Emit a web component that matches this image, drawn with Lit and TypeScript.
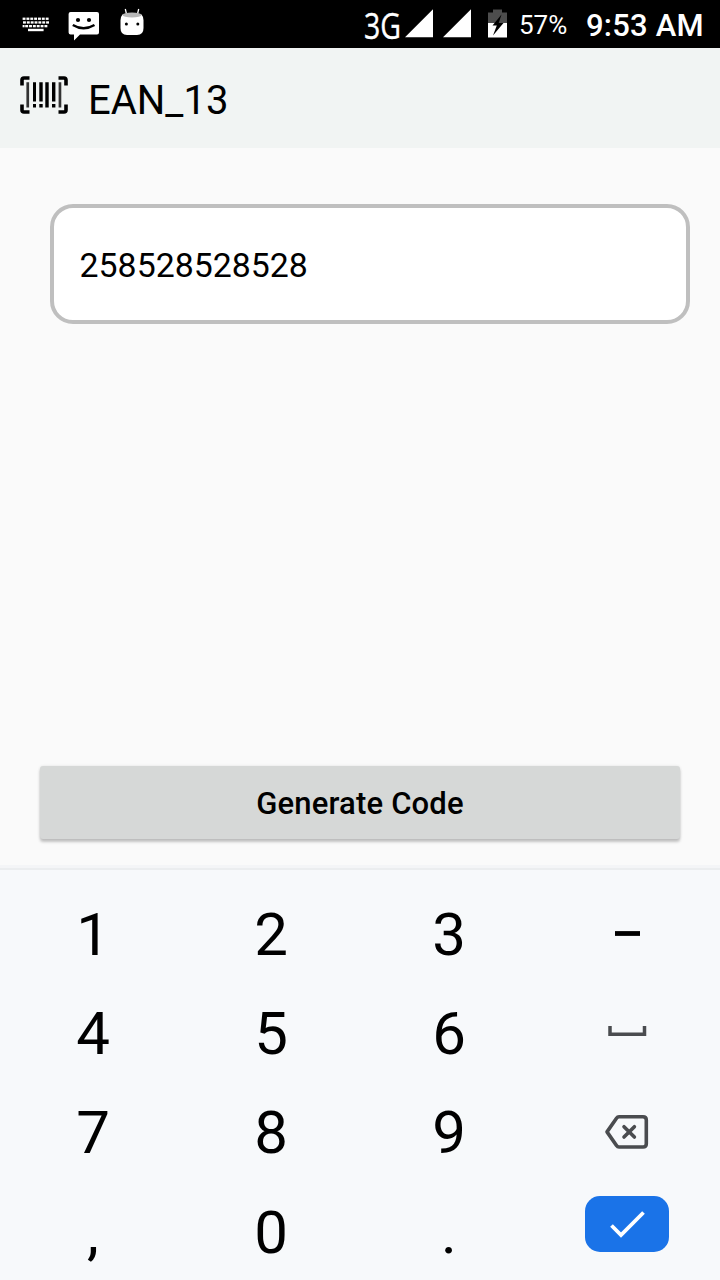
import { LitElement, html, css, svg } from "lit";
import { customElement, property } from "lit/decorators.js";

@customElement("status-bar")
class StatusBar extends LitElement {
  static styles = css`
    :host { display: flex; height: 48px; background: #000; color: #fff; box-sizing: border-box; padding: 0 16px 0 20px; justify-content: space-between; }
    svg { display: block; flex: none; }
    .side { display: flex; }
    .net { width: 38px; font: 400 37px/50px "Open Sans", sans-serif; transform: scaleX(0.77); transform-origin: 0 0; white-space: nowrap; margin-left: -1px; -webkit-text-stroke: 0.4px #fff; }
    .pct { font-size: 26px; line-height: 50px; margin-left: 9px; width: 67px; white-space: nowrap; }
    .time { font-size: 31px; font-weight: 500; line-height: 51px; white-space: nowrap; width: 118px; letter-spacing: 0.2px; }
  `;
  render() {
    const keys = [];
    for (let r = 0; r < 3; r++) {
      for (let c = 0; c < 7; c++) {
        if (r === 2 && c === 6) continue;
        keys.push(svg`<rect x=${2.6 + c * 3.85 + (r === 2 ? 2.6 : 0) + (r === 1 ? 0.4 : 0)} y=${17.6 + r * 3.7} width="2.9" height="2.3" />`);
      }
    }
    return html`
      <div class="side">
        <svg width="126" height="48" fill="#fff">
          ${keys}
          <rect x="2.6" y="25" width="2" height="2.3" />
          <rect x="8" y="28.8" width="15.6" height="2.4" />
          <path d="M50.600 12h26.400a2 2 0 0 1 2 2v18.400a2 2 0 0 1-2 2H60l-6 6v-6h-3.400a2 2 0 0 1-2-2V14a2 2 0 0 1 2-2z" />
          <circle cx="58" cy="20" r="2.1" fill="#000" /><circle cx="69" cy="20" r="2.1" fill="#000" />
          <path d="M52.800 25Q63.500 31.500 74.500 25" fill="none" stroke="#000" stroke-width="2.4" />
          <path d="M105.300 9l1.200 5M118.700 9l-1.200 5" stroke="#fff" stroke-width="1.300" />
          <path d="M102.500 14.500h19q2 2 2 6v7.500q0 7-6.500 7h-10q-6.500 0-6.500-7v-7.500q0-4 2-6z" />
          <ellipse cx="112" cy="15" rx="9.500" ry="2.500" fill="#b8b8b8" />
          <circle cx="106.400" cy="24" r="1.500" fill="#000" /><circle cx="117.800" cy="24" r="1.500" fill="#000" />
        </svg>
      </div>
      <div class="side">
        <div class="net">3G</div>
        <svg width="108" height="48" fill="#fff">
          <path d="M3 37.300L31 9.300v28zM41 37.300L69 9.300v28z" />
          <path d="M91 9.500h9v3h5v11H86v-11h5z" fill="#4d4d4d" />
          <path d="M86 23h19v14.500H86z" />
          <path d="M99.500 14.500l-9 11h4.300L91 35.500l10.500-12.500h-4.800z" fill="#000" />
        </svg>
        <div class="pct">57%</div>
        <div class="time">9:53 AM</div>
      </div>
    `;
  }
}

@customElement("title-bar")
class TitleBar extends LitElement {
  @property() label = "";
  static styles = css`
    :host { display: flex; height: 100px; background: #f1f4f3; padding-left: 18px; box-sizing: border-box; }
    svg { display: block; flex: none; }
    h1 { margin: 0 0 0 18px; font-size: 40px; font-weight: 400; line-height: 105px; color: #000; }
  `;
  render() {
    return html`
      <svg width="52" height="100" fill="#000">
        <path d="M11.500 30H6q-2 0-2 2v5.500M40.500 30H46q2 0 2 2v5.500M11.500 64H6q-2 0-2-2v-5.500M40.500 64H46q2 0 2-2v-5.500" fill="none" stroke="#000" stroke-width="3.600" />
        <path d="M8.400 34.300h2.700v25.200H8.400zM40.600 34.300h2.700v25.200h-2.700z" fill="#333" />
        <path d="M15 34.300h3v19.200h-3zM15 56h3v3.500h-3zM21.300 34.300h3.400v19.200h-3.400zM21.300 56h3.400v3.500h-3.400zM27.300 34.300h3.400v25.200h-3.400zM34 34.300h3.400v19.200H34zM34 56h3.400v3.500H34z" />
      </svg>
      <h1>${this.label}</h1>
    `;
  }
}

@customElement("num-pad")
class NumPad extends LitElement {
  static styles = css`
    :host { display: grid; grid-template-columns: repeat(4, 178px); grid-template-rows: repeat(4, 99px); padding: 15px 4px 0; height: 415px; box-sizing: border-box; background: #f7f9fb; border-top: 3px solid #f4f5f7; box-shadow: inset 0 2px #ebedef; overflow: hidden; }
    .key { display: flex; justify-content: center; font-size: 60px; line-height: 103px; color: #000; }
    .key:nth-child(n + 13) { line-height: 105px; }
    svg { display: block; margin-top: 3px; }
    .enter { width: 84px; height: 56px; border-radius: 15px; background: #1a73e8; margin-top: 16px; }
    .enter svg { margin: 0; }
  `;
  icon(name: string) {
    switch (name) {
      case "dash":
        return html`<svg width="60" height="99"><path d="M18 47.500h25" stroke="#000" stroke-width="4.800" /></svg>`;
      case "space":
        return html`<svg width="60" height="99"><path d="M13 41v8.200h34.500V41" fill="none" stroke="#4a4c4f" stroke-width="3.500" /></svg>`;
      case "back":
        return html`<svg width="60" height="99" fill="none" stroke="#4a4c4f" stroke-width="3.600" stroke-linejoin="round" stroke-linecap="round">
          <path d="M22 32.800H46q3.300 0 3.300 3.300V59.700q0 3.300-3.300 3.300H22q-1.500 0-2.500-1.500L10 47.900 19.500 34.300q1-1.500 2.500-1.500z" />
          <path d="M27 42.700l10.400 10.400M37.400 42.700L27 53.100" />
        </svg>`;
      case "enter":
        return html`<div class="enter"><svg width="84" height="56"><path d="M26.500 29.500l9.500 9.500 22.500-22.500" fill="none" stroke="#fff" stroke-width="3.800" /></svg></div>`;
    }
    return name;
  }
  render() {
    return ["1", "2", "3", "dash", "4", "5", "6", "space", "7", "8", "9", "back", ",", "0", ".", "enter"].map(
      (k) => html`<div class="key">${this.icon(k)}</div>`
    );
  }
}

@customElement("app-root")
class AppRoot extends LitElement {
  static styles = css`
    :host { display: flex; flex-direction: column; width: 720px; height: 1280px; background: #fafafa; font-family: Roboto, sans-serif; overflow: hidden; }
    .body { flex: 1; display: flex; flex-direction: column; justify-content: space-between; padding: 56px 30px 26px 40px; }
    .field { margin-left: 10px; height: 120px; box-sizing: border-box; border: 4px solid #bfbfbf; border-radius: 23px; background: #fff; padding-left: 25.6px; font-size: 33.84px; line-height: 115px; color: #000; }
    .generate { width: 640px; height: 73px; border: 0; border-radius: 3px; background: #d6d8d7; box-shadow: 0 3px 3px rgba(0, 0, 0, 0.22), 0 0 3px rgba(0, 0, 0, 0.1); font: 500 31px/75px Roboto, sans-serif; letter-spacing: 0.18px; color: #000; padding: 0; }
  `;
  render() {
    return html`
      <status-bar></status-bar>
      <title-bar label="EAN_13"></title-bar>
      <div class="body">
        <div class="field">258528528528</div>
        <button class="generate">Generate Code</button>
      </div>
      <num-pad></num-pad>
    `;
  }
}
